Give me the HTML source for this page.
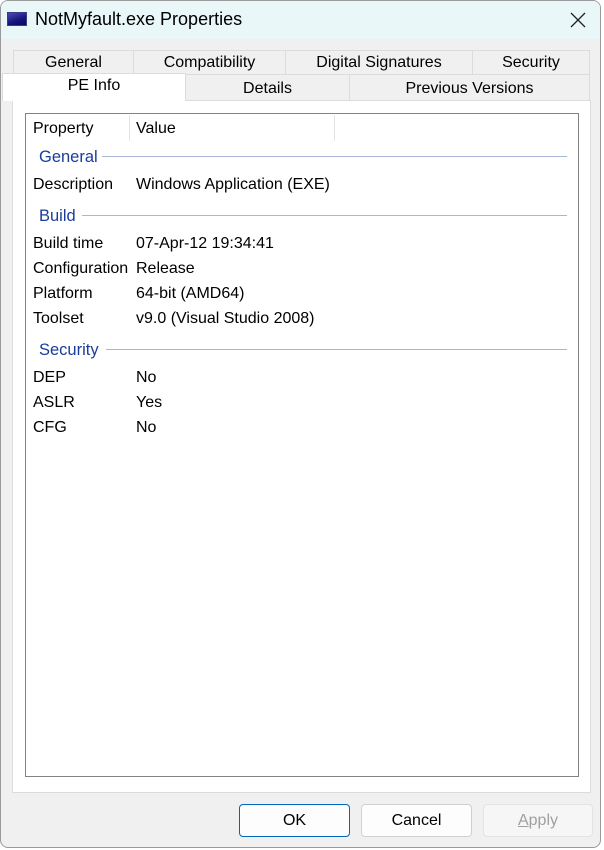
<!DOCTYPE html>
<html><head><meta charset="utf-8"><style>
*{box-sizing:border-box;margin:0;padding:0}
body{width:604px;height:850px;background:#fff;font-family:"Liberation Sans",sans-serif;font-size:16px;color:#000;position:relative;overflow:hidden}
.win{position:absolute;left:0;top:0;width:601px;height:848px;background:#f0f0f0;border:1px solid #9a9a9a;border-radius:8px;overflow:hidden}
.title{position:absolute;left:0;top:0;width:100%;height:38px;background:#e9f7f8}
.title .t{position:absolute;left:34px;top:8px;font-size:18px}
.icon{position:absolute;left:6px;top:11px;width:20px;height:14px;background:linear-gradient(160deg,#4a4ab8,#14147a 60%,#0a0a60);border:1px solid #3a3a8a}
.close{position:absolute;left:569px;top:11px}
.tab{position:absolute;background:#f0f0f0;border:1px solid #dcdcdc;text-align:center;font-size:16px;line-height:24px}
.panel{position:absolute;left:11px;top:99px;width:579px;height:693px;background:#fff;border:1px solid #dcdcdc}
.list{position:absolute;left:25px;top:113px;width:554px;height:664px;background:#fff;border:1px solid #838383}
.a{position:absolute;white-space:nowrap}
.sec{color:#1a3d9c;font-size:16.5px}
.ln{position:absolute;height:1px;background:#a9b6d8}
.btn{position:absolute;top:804px;width:111px;height:33px;border:1px solid #d0d0d0;border-radius:4px;background:#fdfdfd;text-align:center;line-height:31px;font-size:16px}
</style></head><body>
<div class="win">
<div class="title"><div class="icon"></div><div class="t">NotMyfault.exe Properties</div>
<svg class="close" width="16" height="16" viewBox="0 0 16 16"><path d="M1 1L15 15M15 1L1 15" stroke="#222" stroke-width="1.3"/></svg></div>
<div class="tab" style="left:12px;top:49px;width:121px;height:25px">General</div>
<div class="tab" style="left:132px;top:49px;width:153px;height:25px">Compatibility</div>
<div class="tab" style="left:284px;top:49px;width:188px;height:25px">Digital Signatures</div>
<div class="tab" style="left:471px;top:49px;width:118px;height:25px">Security</div>
<div class="tab" style="left:184px;top:73px;width:165px;height:27px;line-height:27px">Details</div>
<div class="tab" style="left:348px;top:73px;width:241px;height:27px;line-height:27px">Previous Versions</div>
<div class="panel"></div>
<div class="tab" style="left:1px;top:72px;width:184px;height:28px;background:#fff;border-bottom:none;line-height:24px;z-index:2">PE Info</div>
</div>
<div class="list">
<div class="a" style="left:103px;top:1px;width:1px;height:26px;background:#e2e2e2"></div>
<div class="a" style="left:308px;top:1px;width:1px;height:26px;background:#e2e2e2"></div>
<div class="a" style="left:7px;top:6px">Property</div>
<div class="a" style="left:110px;top:6px">Value</div>
<div class="a sec" style="left:13px;top:34px">General</div><div class="ln" style="left:76px;top:42px;width:465px"></div>
<div class="a" style="left:7px;top:62px">Description</div><div class="a" style="left:110px;top:62px">Windows Application (EXE)</div>
<div class="a sec" style="left:13px;top:93px">Build</div><div class="ln" style="left:56px;top:101px;width:485px"></div>
<div class="a" style="left:7px;top:121px">Build time</div><div class="a" style="left:110px;top:121px">07-Apr-12 19:34:41</div>
<div class="a" style="left:7px;top:146px">Configuration</div><div class="a" style="left:110px;top:146px">Release</div>
<div class="a" style="left:7px;top:171px">Platform</div><div class="a" style="left:110px;top:171px">64-bit (AMD64)</div>
<div class="a" style="left:7px;top:196px">Toolset</div><div class="a" style="left:110px;top:196px">v9.0 (Visual Studio 2008)</div>
<div class="a sec" style="left:13px;top:227px">Security</div><div class="ln" style="left:80px;top:235px;width:461px"></div>
<div class="a" style="left:7px;top:255px">DEP</div><div class="a" style="left:110px;top:255px">No</div>
<div class="a" style="left:7px;top:280px">ASLR</div><div class="a" style="left:110px;top:280px">Yes</div>
<div class="a" style="left:7px;top:305px">CFG</div><div class="a" style="left:110px;top:305px">No</div>
</div>
<div class="btn" style="left:239px;border-color:#0067c0">OK</div>
<div class="btn" style="left:361px">Cancel</div>
<div class="btn" style="left:483px;width:110px;color:#a0a0a0;background:#f6f6f6;border-color:#e3e3e3"><u>A</u>pply</div>
</body></html>
